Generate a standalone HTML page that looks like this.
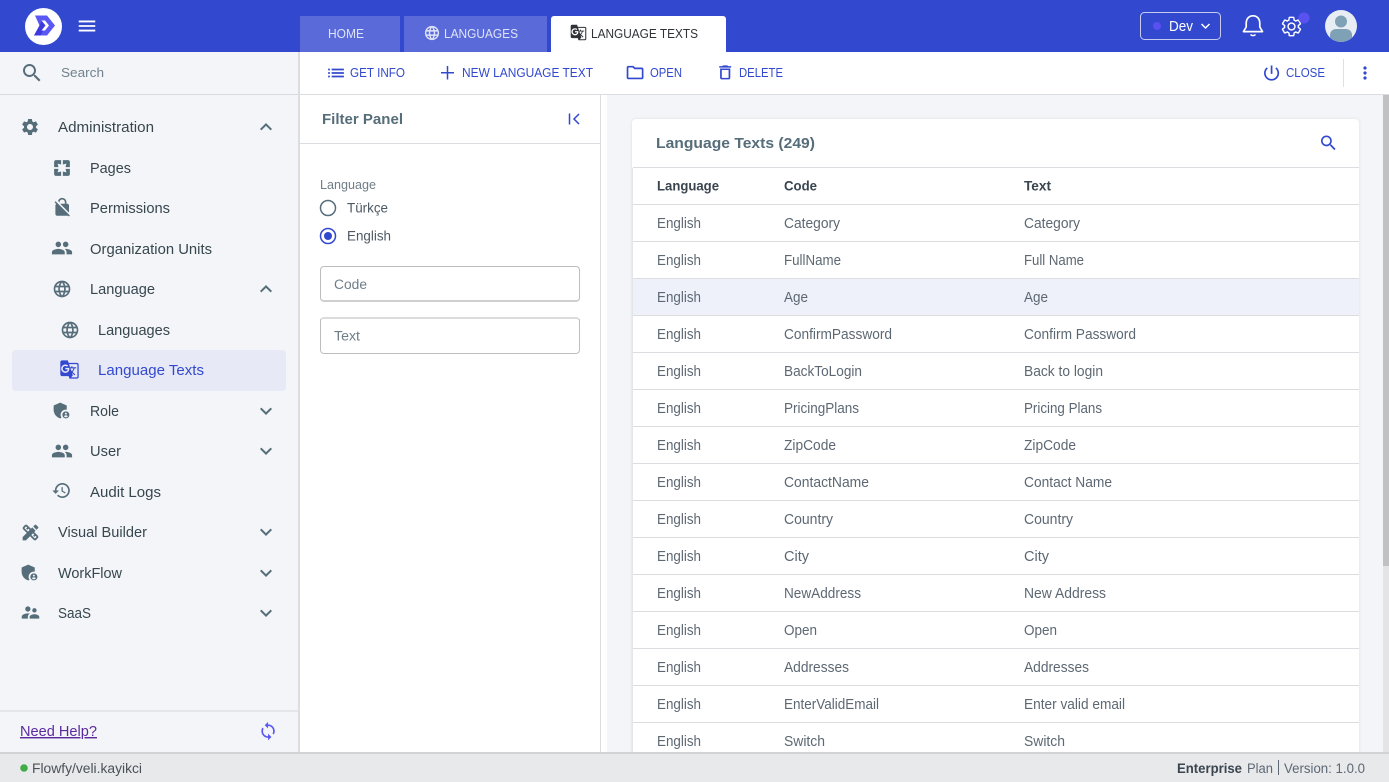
<!DOCTYPE html>
<html lang="en"><head><meta charset="utf-8"><title>Language Texts</title>
<style>
html,body{margin:0;padding:0;width:1389px;height:782px;overflow:hidden;background:#f4f5f8}
div{position:absolute;box-sizing:border-box}
svg{position:absolute;left:0;top:0}
text{font-family:"Liberation Sans",sans-serif;font-size:14.3px;fill:#3f4b55}
.s{fill:#37474f}
.t{fill:#5d6873}
.h{fill:#3a4550;font-weight:bold;font-size:13.6px}
.b{fill:#3249cf;font-size:12.8px}
.l{position:absolute;left:633px;width:726px;height:1px;background:#dcdde0}
</style></head><body>
<div style="left:0;top:0;width:1389px;height:52px;background:#3249cf"></div>
<div style="left:300px;top:16px;width:100px;height:36px;background:#5a6bd9"></div>
<div style="left:404px;top:16px;width:143px;height:36px;background:#5a6bd9"></div>
<div style="left:551px;top:16px;width:175px;height:36px;background:#fff;border-radius:3px 3px 0 0"></div>
<div style="left:0;top:52px;width:300px;height:700px;background:#f4f5f8;border-right:2px solid #dcdde0"></div>
<div style="left:0;top:94px;width:298px;height:1px;background:#d9dadd"></div>
<div style="left:0;top:710px;width:298px;height:2px;background:#e5e6e9"></div>
<div style="left:12px;top:350px;width:274px;height:41px;background:#e7e9f6;border-radius:4px"></div>
<div style="left:300px;top:52px;width:1089px;height:43px;background:#fff;border-bottom:1px solid #dcdde0"></div>
<div style="left:300px;top:95px;width:307px;height:657px;background:#fff"></div>
<div style="left:600px;top:95px;width:1px;height:657px;background:#dcdde0"></div>
<div style="left:300px;top:143px;width:300px;height:1px;background:#dcdde0"></div>
<div style="left:320px;top:266px;width:260px;height:36px;background:#fff;border:1px solid #bdbdbd;border-bottom:2px solid #cfcfcf;border-radius:4px"></div>
<div style="left:320px;top:317px;width:260px;height:37px;background:#fff;border:1px solid #bdbdbd;border-top:2px solid #dcdcdc;border-radius:4px"></div>
<div style="left:1343px;top:59px;width:1px;height:28px;background:#dfe0e3"></div>
<div style="left:632px;top:119px;width:727px;height:640px;background:#fff;border-radius:4px 4px 0 0;box-shadow:0 0 3px rgba(0,0,0,.1)"></div>
<div style="left:632px;top:168px;width:1px;height:584px;background:#e4e5e8"></div>
<div style="left:633px;top:279px;width:726px;height:36px;background:#eef1fa"></div>
<div class="l" style="top:167px"></div>
<div class="l" style="top:204px"></div>
<div class="l" style="top:241px"></div>
<div class="l" style="top:278px"></div>
<div class="l" style="top:315px"></div>
<div class="l" style="top:352px"></div>
<div class="l" style="top:389px"></div>
<div class="l" style="top:426px"></div>
<div class="l" style="top:463px"></div>
<div class="l" style="top:500px"></div>
<div class="l" style="top:537px"></div>
<div class="l" style="top:574px"></div>
<div class="l" style="top:611px"></div>
<div class="l" style="top:648px"></div>
<div class="l" style="top:685px"></div>
<div class="l" style="top:722px"></div>
<div style="left:1383px;top:95px;width:6px;height:657px;background:#e4e4e5"></div>
<div style="left:1383px;top:95px;width:6px;height:471px;background:#c1c1c2"></div>
<div style="left:0;top:752px;width:1389px;height:30px;background:#e8e9eb;border-top:2px solid #d2d3d5"></div>

<svg width="1389" height="782" viewBox="0 0 1389 782" xmlns="http://www.w3.org/2000/svg">
<symbol id="menu" viewBox="0 0 24 24"><path d="M3 18h18v-2H3v2zm0-5h18v-2H3v2zm0-7v2h18V6H3z"/></symbol>
<symbol id="search" viewBox="0 0 24 24"><path d="M15.5 14h-.79l-.28-.27C15.41 12.59 16 11.11 16 9.5 16 5.91 13.09 3 9.5 3S3 5.91 3 9.5 5.91 16 9.5 16c1.61 0 3.09-.59 4.23-1.57l.27.28v.79l5 4.99L20.49 19l-4.99-5zm-6 0C7.01 14 5 11.99 5 9.5S7.01 5 9.5 5 14 7.01 14 9.5 11.99 14 9.5 14z"/></symbol>
<symbol id="gear" viewBox="0 0 24 24"><path d="M19.14 12.94c.04-.3.06-.61.06-.94 0-.32-.02-.64-.07-.94l2.03-1.58c.18-.14.23-.41.12-.61l-1.92-3.32c-.12-.22-.37-.29-.59-.22l-2.39.96c-.5-.38-1.03-.7-1.62-.94l-.36-2.54c-.04-.24-.24-.41-.48-.41h-3.84c-.24 0-.43.17-.47.41l-.36 2.54c-.59.24-1.13.57-1.62.94l-2.39-.96c-.22-.08-.47 0-.59.22L2.74 8.87c-.12.21-.08.47.12.61l2.03 1.58c-.05.3-.09.63-.09.94s.02.64.07.94l-2.03 1.58c-.18.14-.23.41-.12.61l1.92 3.32c.12.22.37.29.59.22l2.39-.96c.5.38 1.03.7 1.62.94l.36 2.54c.05.24.24.41.48.41h3.84c.24 0 .44-.17.47-.41l.36-2.54c.59-.24 1.13-.56 1.62-.94l2.39.96c.22.08.47 0 .59-.22l1.92-3.32c.12-.22.07-.47-.12-.61l-2.01-1.58zM12 15.6c-1.98 0-3.6-1.62-3.6-3.6s1.62-3.6 3.6-3.6 3.6 1.62 3.6 3.6-1.62 3.6-3.6 3.6z"/></symbol>
<symbol id="people" viewBox="0 0 24 24"><path d="M16 11c1.66 0 2.99-1.34 2.99-3S17.66 5 16 5c-1.66 0-3 1.34-3 3s1.34 3 3 3zm-8 0c1.66 0 2.99-1.34 2.99-3S9.66 5 8 5C6.34 5 5 6.34 5 8s1.34 3 3 3zm0 2c-2.33 0-7 1.17-7 3.5V19h14v-2.5c0-2.33-4.67-3.5-7-3.5zm8 0c-.29 0-.62.02-.97.05 1.16.84 1.97 1.97 1.97 3.45V19h6v-2.5c0-2.33-4.67-3.5-7-3.5z"/></symbol>
<symbol id="globe" viewBox="0 0 24 24"><path d="M11.99 2C6.47 2 2 6.48 2 12s4.47 10 9.99 10C17.52 22 22 17.52 22 12S17.52 2 11.99 2zm6.93 6h-2.95c-.32-1.25-.78-2.45-1.38-3.56 1.84.63 3.37 1.91 4.33 3.56zM12 4.04c.83 1.2 1.48 2.53 1.91 3.96h-3.82c.43-1.43 1.08-2.76 1.91-3.96zM4.26 14C4.1 13.36 4 12.69 4 12s.1-1.36.26-2h3.38c-.08.66-.14 1.32-.14 2 0 .68.06 1.34.14 2H4.26zm.82 2h2.95c.32 1.25.78 2.45 1.38 3.56-1.84-.63-3.37-1.9-4.33-3.56zm2.95-8H5.08c.96-1.66 2.49-2.93 4.33-3.56C8.81 5.55 8.35 6.75 8.03 8zM12 19.96c-.83-1.2-1.48-2.53-1.91-3.96h3.82c-.43 1.43-1.08 2.76-1.91 3.96zM14.34 14H9.66c-.09-.66-.16-1.32-.16-2 0-.68.07-1.35.16-2h4.68c.09.65.16 1.32.16 2 0 .68-.07 1.34-.16 2zm.25 5.56c.6-1.11 1.06-2.31 1.38-3.56h2.95c-.96 1.65-2.49 2.93-4.33 3.56zM16.36 14c.08-.66.14-1.32.14-2 0-.68-.06-1.34-.14-2h3.38c.16.64.26 1.31.26 2s-.1 1.36-.26 2h-3.38z"/></symbol>
<symbol id="history" viewBox="0 0 24 24"><path d="M13 3c-4.97 0-9 4.03-9 9H1l3.89 3.89.07.14L9 12H6c0-3.87 3.13-7 7-7s7 3.13 7 7-3.13 7-7 7c-1.93 0-3.68-.79-4.94-2.06l-1.42 1.42C8.27 19.99 10.51 21 13 21c4.97 0 9-4.03 9-9s-4.03-9-9-9zm-1 5v5l4.28 2.54.72-1.21-3.5-2.08V8H12z"/></symbol>
<symbol id="more" viewBox="0 0 24 24"><path d="M16.59 8.59L12 13.17 7.41 8.59 6 10l6 6 6-6z"/></symbol>
<symbol id="less" viewBox="0 0 24 24"><path d="M12 8l-6 6 1.41 1.41L12 10.83l4.59 4.58L18 14z"/></symbol>
<symbol id="trans" viewBox="0 0 24 24"><path d="M21 4H11l-1-3H3c-1.1 0-2 .9-2 2v15c0 1.1.9 2 2 2h8l1 3h9c1.1 0 2-.9 2-2V6c0-1.1-.9-2-2-2zM7 16c-2.76 0-5-2.24-5-5s2.24-5 5-5c1.35 0 2.48.5 3.35 1.3L9.03 8.57c-.38-.36-1.04-.78-2.03-.78-1.74 0-3.15 1.44-3.15 3.21S5.26 14.21 7 14.21c2.01 0 2.84-1.44 2.92-2.41H7v-1.71h4.68c.07.31.12.61.12 1.02C11.8 13.97 9.89 16 7 16zm6.17-5.42h3.7c-.43 1.25-1.11 2.43-2.05 3.47-.31-.35-.6-.72-.86-1.1l-.79-2.37zm8.33 9.92c0 .55-.45 1-1 1H14l2-2.5-1.04-3.1 3.1 3.1.92-.92-3.3-3.25.02-.02c1.13-1.25 1.93-2.69 2.4-4.22H20v-1.3h-4.53V8h-1.29v1.29h-1.44L11.46 5.5h9.04c.55 0 1 .45 1 1v14z"/></symbol>
<symbol id="shield" viewBox="0 0 24 24"><path d="M17 11c.34 0 .67.04 1 .09V6.27L10.5 3 3 6.27v4.91c0 4.54 3.2 8.79 7.5 9.82.55-.13 1.08-.32 1.6-.55-.69-.98-1.1-2.17-1.1-3.45 0-3.31 2.69-6 6-6z"/><path d="M17 13c-2.21 0-4 1.79-4 4s1.79 4 4 4 4-1.79 4-4-1.79-4-4-4zm0 1.38c.62 0 1.12.51 1.12 1.12s-.51 1.12-1.12 1.12-1.12-.51-1.12-1.12.5-1.12 1.12-1.12zm0 5.37c-.93 0-1.74-.46-2.24-1.17.05-.72 1.51-1.08 2.24-1.08s2.19.36 2.24 1.08c-.5.71-1.31 1.17-2.24 1.17z"/></symbol>

<!-- header -->
<circle cx="43.5" cy="26.5" r="18.5" fill="#fff"/>
<path d="M35 15.500H47L55 25.500 47 35.500H34L39.500 25.500z" fill="#5b57f5"/>
<path d="M34 35.500H40.500L46 25.500 42 20.500 39.500 25.500z" fill="#3d3be0"/>
<path d="M41.500 20.500H45L49 25.500 45 30.500H41.500L45.500 25.500z" fill="#fff"/>
<use href="#menu" x="76" y="13" width="22" height="26" fill="#fff"/>
<text x="328" y="38" textLength="36" lengthAdjust="spacingAndGlyphs" style="fill:#dfe3f7;font-size:13px">HOME</text>
<use href="#globe" x="423.500" y="24.500" width="17" height="17" fill="#dfe3f7"/>
<text x="444" y="38" textLength="74" lengthAdjust="spacingAndGlyphs" style="fill:#dfe3f7;font-size:13px">LANGUAGES</text>
<use href="#trans" x="570" y="24" width="17" height="17" fill="#2f3338"/>
<text x="591" y="38" textLength="107" lengthAdjust="spacingAndGlyphs" style="fill:#2f3338;font-size:13px">LANGUAGE TEXTS</text>
<rect x="1140.500" y="12.500" width="80" height="27" rx="4" fill="none" stroke="#c5cbf0"/>
<circle cx="1157" cy="26" r="4" fill="#5a4ff0"/>
<text x="1169" y="31" textLength="24" lengthAdjust="spacingAndGlyphs" style="fill:#fff">Dev</text>
<path d="M1201.500 24l4 4 4-4" fill="none" stroke="#fff" stroke-width="1.500"/>
<path d="M1253 15.800c-4.600 0-6.800 3.500-6.800 7.700v3.500l-2.700 4.600h19l-2.700-4.600v-3.500c0-4.200-2.200-7.700-6.800-7.700z" fill="none" stroke="#fff" stroke-width="1.700" stroke-linejoin="round"/>
<path d="M1250.500 34.500a3 2.400 0 0 0 5 0" fill="none" stroke="#fff" stroke-width="1.500"/>
<use href="#gear" x="1280" y="15" width="23" height="23" fill="none" stroke="#fff" stroke-width="1.500"/>
<circle cx="1304" cy="18" r="5.500" fill="#5a52f0"/>
<circle cx="1341" cy="26" r="16" fill="#e7edf2"/>
<clipPath id="av"><circle cx="1341" cy="26" r="16"/></clipPath>
<g clip-path="url(#av)" fill="#7fa1b5"><circle cx="1341" cy="21.500" r="6"/><rect x="1330" y="29" width="22" height="16" rx="6"/></g>

<!-- sidebar -->
<use href="#search" x="20" y="61" width="24" height="24" fill="#566d7a"/>
<text x="61" y="77" textLength="43" lengthAdjust="spacingAndGlyphs" style="fill:#6f828d;font-size:13.200px">Search</text>
<use href="#gear" x="20" y="117" width="20" height="20" fill="#566d7a"/>
<text class="s" x="58" y="132" textLength="96" lengthAdjust="spacingAndGlyphs">Administration</text>
<use href="#less" x="254" y="115" width="24" height="24" fill="#566d7a"/>
<path d="M3 5v6h5L7 7l4 1V3H5c-1.100 0-2 .9-2 2zm5 8H3v6c0 1.100.9 2 2 2h6v-5l-4 1 1-4zm9 4l-4-1v5h6c1.100 0 2-.9 2-2v-6h-5l1 4zm2-14h-6v5l4-1-1 4h5V5c0-1.100-.9-2-2-2z" fill="#566d7a" transform="translate(51.500 157.500) scale(.875)"/>
<text class="s" x="90" y="173" textLength="41" lengthAdjust="spacingAndGlyphs">Pages</text>
<path d="M21 21.780L4.220 5 3 6.220l2.040 2.040C4.420 8.600 4 9.250 4 10v10c0 1.100.9 2 2 2h12c.23 0 .45-.05.66-.12L19.780 23 21 21.780zM8.900 6c0-1.710 1.390-3.100 3.100-3.100s3.100 1.390 3.100 3.100v2H9.660L20 18.340V10c0-1.100-.9-2-2-2h-1V6c0-2.760-2.240-5-5-5-2.320 0-4.260 1.590-4.820 3.740L8.900 6.460V6z" fill="#566d7a" transform="translate(52 197) scale(.85)"/>
<text class="s" x="90" y="213" textLength="80" lengthAdjust="spacingAndGlyphs">Permissions</text>
<use href="#people" x="51" y="237" width="22" height="22" fill="#566d7a"/>
<text class="s" x="90" y="254" textLength="122" lengthAdjust="spacingAndGlyphs">Organization Units</text>
<use href="#globe" x="52" y="279" width="20" height="20" fill="#566d7a"/>
<text class="s" x="90" y="294" textLength="65" lengthAdjust="spacingAndGlyphs">Language</text>
<use href="#less" x="254" y="277" width="24" height="24" fill="#566d7a"/>
<use href="#globe" x="60" y="320" width="20" height="20" fill="#566d7a"/>
<text class="s" x="98" y="335" textLength="72" lengthAdjust="spacingAndGlyphs">Languages</text>
<use href="#trans" x="59.500" y="359.500" width="20" height="20" fill="#3249cf"/>
<text x="98" y="375" textLength="106" lengthAdjust="spacingAndGlyphs" style="fill:#3249cf">Language Texts</text>
<use href="#shield" x="51" y="400" width="21" height="21" fill="#566d7a"/>
<text class="s" x="90" y="416" textLength="29" lengthAdjust="spacingAndGlyphs">Role</text>
<use href="#more" x="254" y="399" width="24" height="24" fill="#566d7a"/>
<use href="#people" x="51" y="440" width="22" height="22" fill="#566d7a"/>
<text class="s" x="90" y="456" textLength="31" lengthAdjust="spacingAndGlyphs">User</text>
<use href="#more" x="254" y="439" width="24" height="24" fill="#566d7a"/>
<use href="#history" x="51.500" y="480.500" width="20" height="20" fill="#566d7a"/>
<text class="s" x="90" y="497" textLength="71" lengthAdjust="spacingAndGlyphs">Audit Logs</text>
<path d="M16.240 11.510l1.570-1.570-3.750-3.750-1.570 1.570-4.140-4.130c-.78-.78-2.050-.78-2.830 0l-1.900 1.900c-.78.78-.78 2.050 0 2.830l4.130 4.130L3 17.250V21h3.750l4.760-4.760 4.130 4.130c.95.95 2.230.6 2.830 0l1.900-1.900c.78-.78.78-2.050 0-2.830l-4.130-4.130zm-7.060-.44L5.040 6.940l1.890-1.900L8.200 6.310 7.020 7.500l1.410 1.410 1.190-1.190 1.450 1.450-1.890 1.900zm7.880 7.890l-4.130-4.140 1.900-1.900 1.450 1.450-1.190 1.190 1.410 1.410 1.190-1.190 1.270 1.270-1.900 1.910zm3.650-11.920c.39-.39.39-1.020 0-1.410l-2.340-2.340c-.47-.47-1.120-.29-1.410 0l-1.830 1.830 3.750 3.750 1.830-1.830z" fill="#566d7a" transform="translate(20 522) scale(.875)"/>
<text class="s" x="58" y="537" textLength="89" lengthAdjust="spacingAndGlyphs">Visual Builder</text>
<use href="#more" x="254" y="520" width="24" height="24" fill="#566d7a"/>
<use href="#shield" x="19" y="562" width="21" height="21" fill="#566d7a"/>
<text class="s" x="58" y="578" textLength="64" lengthAdjust="spacingAndGlyphs">WorkFlow</text>
<use href="#more" x="254" y="561" width="24" height="24" fill="#566d7a"/>
<path d="M16.500 12c1.380 0 2.490-1.120 2.490-2.500S17.880 7 16.500 7C15.120 7 14 8.120 14 9.500s1.120 2.500 2.500 2.500zM9 11c1.660 0 2.990-1.340 2.990-3S10.660 5 9 5C7.340 5 6 6.340 6 8s1.340 3 3 3zm7.500 3c-1.830 0-5.500.92-5.500 2.750V19h11v-2.250c0-1.830-3.670-2.750-5.500-2.750zM9 13c-2.330 0-7 1.170-7 3.500V19h7v-2.250c0-.85.33-2.340 2.370-3.470C10.500 13.100 9.660 13 9 13z" fill="#566d7a" transform="translate(20 602) scale(.875)"/>
<text class="s" x="58" y="618" textLength="33" lengthAdjust="spacingAndGlyphs">SaaS</text>
<use href="#more" x="254" y="601" width="24" height="24" fill="#566d7a"/>
<text x="20" y="736" textLength="77" lengthAdjust="spacingAndGlyphs" style="fill:#5a2a9e;text-decoration:underline">Need Help?</text>
<path d="M12 4V1L8 5l4 4V6c3.310 0 6 2.690 6 6 0 1.010-.25 1.970-.7 2.800l1.460 1.460C19.540 15.030 20 13.570 20 12c0-4.420-3.580-8-8-8zm0 14c-3.310 0-6-2.690-6-6 0-1.010.25-1.970.7-2.800L5.240 7.740C4.460 8.970 4 10.430 4 12c0 4.420 3.580 8 8 8v3l4-4-4-4v3z" fill="#5b5af0" transform="translate(258 721) scale(.84)"/>

<!-- toolbar -->
<path d="M3 13h2v-2H3v2zm0 4h2v-2H3v2zm0-8h2V7H3v2zm4 4h14v-2H7v2zm0 4h14v-2H7v2zM7 7v2h14V7H7z" fill="#3249cf" transform="translate(325.500 62.500) scale(.875)"/>
<text class="b" x="350" y="77" textLength="55" lengthAdjust="spacingAndGlyphs">GET INFO</text>
<path d="M447.500 66v13.500M441 72.750h13" stroke="#3249cf" stroke-width="1.500" fill="none"/>
<text class="b" x="462" y="77" textLength="131" lengthAdjust="spacingAndGlyphs">NEW LANGUAGE TEXT</text>
<path d="M9.170 6l2 2H20v10H4V6h5.170M10 4H4c-1.100 0-1.990.9-1.990 2L2 18c0 1.100.9 2 2 2h16c1.100 0 2-.9 2-2V8c0-1.100-.9-2-2-2h-8l-2-2z" fill="#3249cf" transform="translate(625 62.500) scale(.84)"/>
<text class="b" x="650" y="77" textLength="32" lengthAdjust="spacingAndGlyphs">OPEN</text>
<path d="M6 19c0 1.100.9 2 2 2h8c1.100 0 2-.9 2-2V7H6v12zM8 9h8v10H8V9zm7.500-5l-1-1h-5l-1 1H5v2h14V4z" fill="#3249cf" transform="translate(715 63) scale(.85 .78)"/>
<text class="b" x="739" y="77" textLength="44" lengthAdjust="spacingAndGlyphs">DELETE</text>
<path d="M13 3h-2v10h2V3zm4.830 2.170l-1.420 1.420C17.990 7.860 19 9.810 19 12c0 3.870-3.130 7-7 7s-7-3.130-7-7c0-2.190 1.010-4.140 2.580-5.420L6.170 5.170C4.230 6.820 3 9.260 3 12c0 4.970 4.030 9 9 9s9-4.030 9-9c0-2.740-1.230-5.180-3.170-6.830z" fill="#3249cf" transform="translate(1261.500 63) scale(.84)"/>
<text class="b" x="1286" y="77" textLength="39" lengthAdjust="spacingAndGlyphs">CLOSE</text>
<circle cx="1365" cy="68" r="1.600" fill="#3249cf"/><circle cx="1365" cy="73" r="1.600" fill="#3249cf"/><circle cx="1365" cy="78" r="1.600" fill="#3249cf"/>

<!-- filter panel -->
<text x="322" y="124" textLength="81" lengthAdjust="spacingAndGlyphs" style="fill:#566d7a;font-weight:bold;font-size:14.500px">Filter Panel</text>
<path d="M569.500 113.500v11" stroke="#3249cf" stroke-width="1.500" fill="none"/>
<path d="M579 114l-5 5 5 5" stroke="#3249cf" stroke-width="1.500" fill="none"/>
<text x="320" y="189" textLength="56" lengthAdjust="spacingAndGlyphs" style="fill:#6f7d87;font-size:12.500px">Language</text>
<circle cx="328" cy="208" r="7.500" fill="none" stroke="#566d7a" stroke-width="1.500"/>
<text x="347" y="212.500" textLength="41" lengthAdjust="spacingAndGlyphs" style="fill:#4d5963;font-size:13.500px">Türkçe</text>
<circle cx="328" cy="236" r="7.500" fill="none" stroke="#3249cf" stroke-width="1.500"/>
<circle cx="328" cy="236" r="4" fill="#3249cf"/>
<text x="347" y="240.500" textLength="44" lengthAdjust="spacingAndGlyphs" style="fill:#4d5963;font-size:13.500px">English</text>
<text x="334" y="289" textLength="33" lengthAdjust="spacingAndGlyphs" style="fill:#6f7d87;font-size:13.500px">Code</text>
<text x="334" y="340.500" textLength="26" lengthAdjust="spacingAndGlyphs" style="fill:#6f7d87;font-size:13.500px">Text</text>

<!-- table -->
<text x="656" y="148" textLength="159" lengthAdjust="spacingAndGlyphs" style="fill:#566d7a;font-weight:bold;font-size:14.500px">Language Texts (249)</text>
<use href="#search" x="1318.500" y="133" width="20" height="20" fill="#3249cf"/>
<text class="h" x="657" y="190.500" textLength="62" lengthAdjust="spacingAndGlyphs">Language</text>
<text class="h" x="784" y="190.500" textLength="33" lengthAdjust="spacingAndGlyphs">Code</text>
<text class="h" x="1024" y="190.500" textLength="27" lengthAdjust="spacingAndGlyphs">Text</text>

<g>
<text class="t" x="657" y="228" textLength="44" lengthAdjust="spacingAndGlyphs">English</text><text class="t" x="784" y="228" textLength="56" lengthAdjust="spacingAndGlyphs">Category</text><text class="t" x="1024" y="228" textLength="56" lengthAdjust="spacingAndGlyphs">Category</text>
<text class="t" x="657" y="265" textLength="44" lengthAdjust="spacingAndGlyphs">English</text><text class="t" x="784" y="265" textLength="57" lengthAdjust="spacingAndGlyphs">FullName</text><text class="t" x="1024" y="265" textLength="60" lengthAdjust="spacingAndGlyphs">Full Name</text>
<text class="t" x="657" y="302" textLength="44" lengthAdjust="spacingAndGlyphs">English</text><text class="t" x="784" y="302" textLength="24" lengthAdjust="spacingAndGlyphs">Age</text><text class="t" x="1024" y="302" textLength="24" lengthAdjust="spacingAndGlyphs">Age</text>
<text class="t" x="657" y="339" textLength="44" lengthAdjust="spacingAndGlyphs">English</text><text class="t" x="784" y="339" textLength="108" lengthAdjust="spacingAndGlyphs">ConfirmPassword</text><text class="t" x="1024" y="339" textLength="112" lengthAdjust="spacingAndGlyphs">Confirm Password</text>
<text class="t" x="657" y="376" textLength="44" lengthAdjust="spacingAndGlyphs">English</text><text class="t" x="784" y="376" textLength="78" lengthAdjust="spacingAndGlyphs">BackToLogin</text><text class="t" x="1024" y="376" textLength="79" lengthAdjust="spacingAndGlyphs">Back to login</text>
<text class="t" x="657" y="413" textLength="44" lengthAdjust="spacingAndGlyphs">English</text><text class="t" x="784" y="413" textLength="75" lengthAdjust="spacingAndGlyphs">PricingPlans</text><text class="t" x="1024" y="413" textLength="78" lengthAdjust="spacingAndGlyphs">Pricing Plans</text>
<text class="t" x="657" y="450" textLength="44" lengthAdjust="spacingAndGlyphs">English</text><text class="t" x="784" y="450" textLength="52" lengthAdjust="spacingAndGlyphs">ZipCode</text><text class="t" x="1024" y="450" textLength="52" lengthAdjust="spacingAndGlyphs">ZipCode</text>
<text class="t" x="657" y="487" textLength="44" lengthAdjust="spacingAndGlyphs">English</text><text class="t" x="784" y="487" textLength="85" lengthAdjust="spacingAndGlyphs">ContactName</text><text class="t" x="1024" y="487" textLength="88" lengthAdjust="spacingAndGlyphs">Contact Name</text>
<text class="t" x="657" y="524" textLength="44" lengthAdjust="spacingAndGlyphs">English</text><text class="t" x="784" y="524" textLength="49" lengthAdjust="spacingAndGlyphs">Country</text><text class="t" x="1024" y="524" textLength="49" lengthAdjust="spacingAndGlyphs">Country</text>
<text class="t" x="657" y="561" textLength="44" lengthAdjust="spacingAndGlyphs">English</text><text class="t" x="784" y="561" textLength="25" lengthAdjust="spacingAndGlyphs">City</text><text class="t" x="1024" y="561" textLength="25" lengthAdjust="spacingAndGlyphs">City</text>
<text class="t" x="657" y="598" textLength="44" lengthAdjust="spacingAndGlyphs">English</text><text class="t" x="784" y="598" textLength="77" lengthAdjust="spacingAndGlyphs">NewAddress</text><text class="t" x="1024" y="598" textLength="82" lengthAdjust="spacingAndGlyphs">New Address</text>
<text class="t" x="657" y="635" textLength="44" lengthAdjust="spacingAndGlyphs">English</text><text class="t" x="784" y="635" textLength="33" lengthAdjust="spacingAndGlyphs">Open</text><text class="t" x="1024" y="635" textLength="33" lengthAdjust="spacingAndGlyphs">Open</text>
<text class="t" x="657" y="672" textLength="44" lengthAdjust="spacingAndGlyphs">English</text><text class="t" x="784" y="672" textLength="65" lengthAdjust="spacingAndGlyphs">Addresses</text><text class="t" x="1024" y="672" textLength="65" lengthAdjust="spacingAndGlyphs">Addresses</text>
<text class="t" x="657" y="709" textLength="44" lengthAdjust="spacingAndGlyphs">English</text><text class="t" x="784" y="709" textLength="95" lengthAdjust="spacingAndGlyphs">EnterValidEmail</text><text class="t" x="1024" y="709" textLength="101" lengthAdjust="spacingAndGlyphs">Enter valid email</text>
<text class="t" x="657" y="746" textLength="44" lengthAdjust="spacingAndGlyphs">English</text><text class="t" x="784" y="746" textLength="41" lengthAdjust="spacingAndGlyphs">Switch</text><text class="t" x="1024" y="746" textLength="41" lengthAdjust="spacingAndGlyphs">Switch</text>
</g>

<!-- footer -->
<circle cx="24" cy="768" r="3.800" fill="#3fae49"/>
<text x="32" y="773" textLength="110" lengthAdjust="spacingAndGlyphs" style="fill:#4a5158;font-size:13.500px">Flowfy/veli.kayikci</text>
<text x="1177" y="773" textLength="65" lengthAdjust="spacingAndGlyphs" style="fill:#3a4550;font-weight:bold;font-size:13.500px">Enterprise</text>
<text x="1247" y="773" textLength="26" lengthAdjust="spacingAndGlyphs" style="fill:#5d6873;font-size:13.500px">Plan</text>
<path d="M1278.500 760v15" stroke="#5d6873" fill="none"/>
<text x="1284" y="773" textLength="81" lengthAdjust="spacingAndGlyphs" style="fill:#5d6873;font-size:13.500px">Version: 1.0.0</text>
</svg>
</body></html>
